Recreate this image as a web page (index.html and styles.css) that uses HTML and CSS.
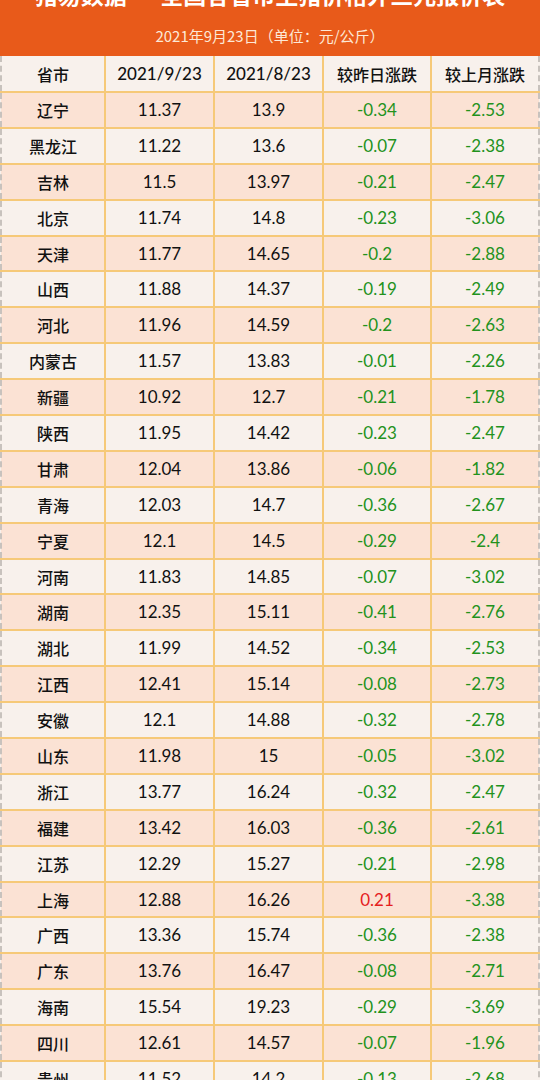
FILE: index.html
```html
<!DOCTYPE html>
<html lang="zh-CN">
<head>
<meta charset="utf-8">
<title>生猪价格报价表</title>
<link rel="stylesheet" href="styles.css">
</head>
<body>
<div class="page">
  <header class="banner">
    <h1 class="title">猪易数据 · 全国各省市生猪价格外三元报价表</h1>
    <p class="subtitle">2021年9月23日（单位：元/公斤）</p>
  </header>
  <table class="prices">
    <colgroup>
      <col class="c1"><col class="c2"><col class="c3"><col class="c4"><col class="c5">
    </colgroup>
    <thead>
      <tr><th>省市</th><th class="num">2021/9/23</th><th class="num">2021/8/23</th><th>较昨日涨跌</th><th>较上月涨跌</th></tr>
    </thead>
    <tbody>
      <tr><td>辽宁</td><td>11.37</td><td>13.9</td><td class="down">-0.34</td><td class="down">-2.53</td></tr>
      <tr><td>黑龙江</td><td>11.22</td><td>13.6</td><td class="down">-0.07</td><td class="down">-2.38</td></tr>
      <tr><td>吉林</td><td>11.5</td><td>13.97</td><td class="down">-0.21</td><td class="down">-2.47</td></tr>
      <tr><td>北京</td><td>11.74</td><td>14.8</td><td class="down">-0.23</td><td class="down">-3.06</td></tr>
      <tr><td>天津</td><td>11.77</td><td>14.65</td><td class="down">-0.2</td><td class="down">-2.88</td></tr>
      <tr><td>山西</td><td>11.88</td><td>14.37</td><td class="down">-0.19</td><td class="down">-2.49</td></tr>
      <tr><td>河北</td><td>11.96</td><td>14.59</td><td class="down">-0.2</td><td class="down">-2.63</td></tr>
      <tr><td>内蒙古</td><td>11.57</td><td>13.83</td><td class="down">-0.01</td><td class="down">-2.26</td></tr>
      <tr><td>新疆</td><td>10.92</td><td>12.7</td><td class="down">-0.21</td><td class="down">-1.78</td></tr>
      <tr><td>陕西</td><td>11.95</td><td>14.42</td><td class="down">-0.23</td><td class="down">-2.47</td></tr>
      <tr><td>甘肃</td><td>12.04</td><td>13.86</td><td class="down">-0.06</td><td class="down">-1.82</td></tr>
      <tr><td>青海</td><td>12.03</td><td>14.7</td><td class="down">-0.36</td><td class="down">-2.67</td></tr>
      <tr><td>宁夏</td><td>12.1</td><td>14.5</td><td class="down">-0.29</td><td class="down">-2.4</td></tr>
      <tr><td>河南</td><td>11.83</td><td>14.85</td><td class="down">-0.07</td><td class="down">-3.02</td></tr>
      <tr><td>湖南</td><td>12.35</td><td>15.11</td><td class="down">-0.41</td><td class="down">-2.76</td></tr>
      <tr><td>湖北</td><td>11.99</td><td>14.52</td><td class="down">-0.34</td><td class="down">-2.53</td></tr>
      <tr><td>江西</td><td>12.41</td><td>15.14</td><td class="down">-0.08</td><td class="down">-2.73</td></tr>
      <tr><td>安徽</td><td>12.1</td><td>14.88</td><td class="down">-0.32</td><td class="down">-2.78</td></tr>
      <tr><td>山东</td><td>11.98</td><td>15</td><td class="down">-0.05</td><td class="down">-3.02</td></tr>
      <tr><td>浙江</td><td>13.77</td><td>16.24</td><td class="down">-0.32</td><td class="down">-2.47</td></tr>
      <tr><td>福建</td><td>13.42</td><td>16.03</td><td class="down">-0.36</td><td class="down">-2.61</td></tr>
      <tr><td>江苏</td><td>12.29</td><td>15.27</td><td class="down">-0.21</td><td class="down">-2.98</td></tr>
      <tr><td>上海</td><td>12.88</td><td>16.26</td><td class="up">0.21</td><td class="down">-3.38</td></tr>
      <tr><td>广西</td><td>13.36</td><td>15.74</td><td class="down">-0.36</td><td class="down">-2.38</td></tr>
      <tr><td>广东</td><td>13.76</td><td>16.47</td><td class="down">-0.08</td><td class="down">-2.71</td></tr>
      <tr><td>海南</td><td>15.54</td><td>19.23</td><td class="down">-0.29</td><td class="down">-3.69</td></tr>
      <tr><td>四川</td><td>12.61</td><td>14.57</td><td class="down">-0.07</td><td class="down">-1.96</td></tr>
      <tr><td>贵州</td><td>11.52</td><td>14.2</td><td class="down">-0.13</td><td class="down">-2.68</td></tr>
    </tbody>
  </table>
</div>
</body>
</html>
```

FILE: styles.css
```css
html, body {
  margin: 0;
  padding: 0;
  background: #f7f1ec;
}
body {
  font-family: Lato, "Noto Sans CJK SC", sans-serif;
  color: #111111;
}
.page {
  width: 540px;
  height: 1080px;
  overflow: hidden;
}
.banner {
  background: #e85a1a;
  height: 56px;
  text-align: center;
  overflow: hidden;
}
.title {
  margin: -19px 0 0;
  font-family: "Noto Sans CJK SC", sans-serif;
  font-size: 23px;
  line-height: 26px;
  font-weight: 700;
  color: #ffffff;
  white-space: nowrap;
}
.subtitle {
  margin: 18px 0 0;
  font-family: "Noto Sans CJK SC", sans-serif;
  font-size: 15px;
  line-height: 22px;
  color: #fde8d6;
}
.prices {
  width: 540px;
  border-collapse: collapse;
  table-layout: fixed;
  border-left: 2px dashed #c8c2bd;
  border-right: 2px dashed #c8c2bd;
}
.c1 { width: 104px; }
.c2 { width: 109px; }
.c3 { width: 109px; }
.c4 { width: 108px; }
.c5 { width: 108px; }
.prices th,
.prices td {
  height: 33.9px;
  padding: 0;
  text-align: center;
  border: 2px solid #f6c978;
  font-size: 17px;
  line-height: 20px;
  font-weight: 400;
}
.prices tr > :first-child { border-left: none; }
.prices tr > :last-child { border-right: none; }
.prices thead th {
  height: 35px;
  border-top: none;
  background: #f8f1ec;
  font-family: "Noto Sans CJK SC", sans-serif;
  font-size: 16px;
  font-weight: 500;
}
.prices thead th.num {
  font-family: Lato, "Noto Sans CJK SC", sans-serif;
  font-size: 17px;
}
.prices td:first-child {
  font-family: "Noto Sans CJK SC", sans-serif;
  font-size: 16px;
  font-weight: 500;
}
.prices tbody tr:nth-child(odd) { background: #fbe2d4; }
.prices tbody tr:nth-child(even) { background: #f8f1ec; }
.down { color: #23921c; }
.up { color: #e5201e; }
```
